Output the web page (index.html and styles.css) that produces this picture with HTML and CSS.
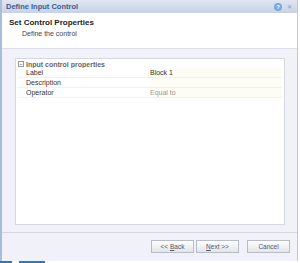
FILE: index.html
```html
<!DOCTYPE html>
<html lang="en">
<head>
  <meta charset="UTF-8" />
  <title>Define Input Control</title>
  <link rel="stylesheet" href="styles.css">
</head>
<body>
  <div class="dialog">
    <div class="titlebar">
      <span class="title">Define Input Control</span>
      <span class="help">?</span>
      <span class="close">&#x2715;</span>
    </div>

    <div class="header">
      <div class="step">Set Control Properties</div>
      <div class="step-desc">Define the control</div>
    </div>

    <div class="body">
      <div class="panel">
        <div class="group">
          <span class="toggle">&minus;</span>
          <span>Input control properties</span>
        </div>
        <div class="row"><span class="key">Label</span><span class="val">Block 1</span></div>
        <div class="row"><span class="key">Description</span><span class="val"></span></div>
        <div class="row"><span class="key">Operator</span><span class="val muted">Equal to</span></div>
      </div>
    </div>

    <div class="footer">
      <button class="btn">&lt;&lt; <u>B</u>ack</button>
      <button class="btn"><u>N</u>ext &gt;&gt;</button>
      <button class="btn cancel">Cancel</button>
    </div>
  </div>
  <div class="taskbar">
    <span class="tb a"></span>
    <span class="tb b"></span>
  </div>
</body>
</html>
```

FILE: styles.css
```css
* {
  box-sizing: border-box;
}

body {
  margin: 0;
  width: 300px;
  height: 263px;
  font-family: "Liberation Sans", Arial, sans-serif;
  font-size: 7px;
  color: #333;
  background: #fff;
  overflow: hidden;
}

.dialog {
  width: 298px;
  height: 261px;
  border-left: 2px solid #a9bcd9;
  border-right: 1px solid #c4c8d0;
  background: #f1f1f9;
  display: flex;
  flex-direction: column;
}

.titlebar {
  height: 13px;
  background: linear-gradient(#dfe6f1, #c6d2e6);
  display: flex;
  align-items: center;
  padding: 0 4px 0 4px;
  gap: 3px;
}

.title {
  flex: 1;
  font-weight: bold;
  font-size: 7.5px;
  color: #3b5a94;
}

.help {
  width: 8px;
  height: 8px;
  border-radius: 50%;
  background: #7aa7dc;
  color: #fff;
  font-size: 6px;
  line-height: 8px;
  text-align: center;
  font-weight: bold;
}

.close {
  font-size: 6px;
  color: #8d9aaf;
  width: 8px;
  text-align: center;
}

.header {
  height: 36px;
  background: #fff;
  border-bottom: 1px solid #dcdde6;
  padding: 5px 0 0 7px;
}

.step {
  font-weight: bold;
  font-size: 8px;
  color: #222;
}

.step-desc {
  margin: 3px 0 0 13px;
  color: #444;
}

.body {
  padding: 9px 12px 0 13px;
}

.panel {
  height: 167px;
  background: #fff;
  border: 1px solid #d6d8e0;
  padding: 1px 2px 0 2px;
}

.group {
  display: flex;
  align-items: center;
  gap: 2px;
  font-weight: bold;
  color: #666;
  height: 8px;
}

.toggle {
  width: 6px;
  height: 6px;
  border: 1px solid #999;
  font-size: 6px;
  line-height: 4px;
  text-align: center;
  color: #555;
  font-weight: normal;
}

.row {
  display: flex;
  height: 10px;
  align-items: center;
  border-bottom: 1px solid #f1f1f1;
  background: #fdfdf6;
}

.key {
  width: 132px;
  padding-left: 8px;
  color: #333;
  background: #fff;
  height: 100%;
  line-height: 10px;
}

.val {
  flex: 1;
  color: #333;
  font-weight: normal;
}

.muted {
  color: #999;
}

.footer {
  margin-top: auto;
  border-top: 1px solid #d6d8e0;
  height: 29px;
  display: flex;
  align-items: center;
  padding: 0 7px 2px 0;
  justify-content: flex-end;
}

.btn {
  font-family: inherit;
  font-size: 6.5px;
  color: #556;
  width: 43px;
  height: 13px;
  padding: 0;
  border: 1px solid #b8bcc6;
  background: linear-gradient(#fdfdfd, #e3e5ea);
  margin-left: 2px;
}

.cancel {
  margin-left: 8px;
}

.taskbar {
  height: 2px;
  display: flex;
}

.tb {
  height: 2px;
  background: #2a78c2;
}

.tb.a {
  width: 12px;
}

.tb.b {
  width: 26px;
  margin-left: 7px;
}
```
